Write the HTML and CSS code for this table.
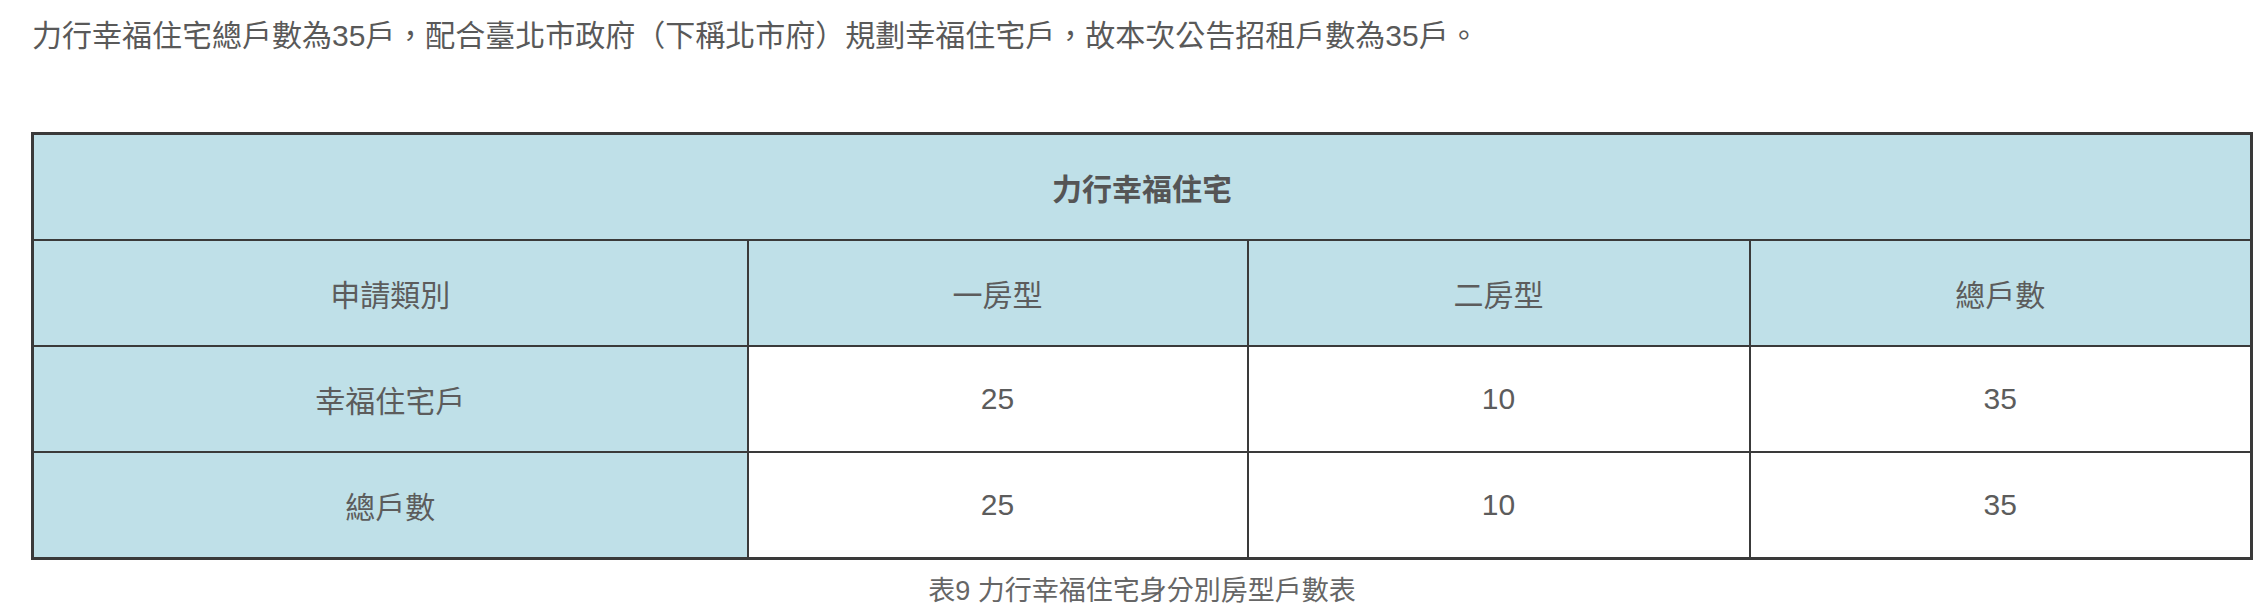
FILE: index.html
```html
<!DOCTYPE html>
<html lang="zh-Hant">
<head>
<meta charset="utf-8">
<title>力行幸福住宅</title>
<link rel="stylesheet" href="styles.css">
</head>
<body>
<main class="content">
  <p class="intro">力行幸福住宅總戶數為35戶，配合臺北市政府（下稱北市府）規劃幸福住宅戶，故本次公告招租戶數為35戶。</p>
  <table class="units">
    <colgroup>
      <col class="c1"><col class="c2"><col class="c3"><col class="c4">
    </colgroup>
    <thead>
      <tr><th colspan="4" class="head title">力行幸福住宅</th></tr>
      <tr>
        <th class="head">申請類別</th>
        <th class="head">一房型</th>
        <th class="head">二房型</th>
        <th class="head">總戶數</th>
      </tr>
    </thead>
    <tbody>
      <tr><th class="head">幸福住宅戶</th><td>25</td><td>10</td><td>35</td></tr>
      <tr><th class="head">總戶數</th><td>25</td><td>10</td><td>35</td></tr>
    </tbody>
    <caption class="cap">表9 力行幸福住宅身分別房型戶數表</caption>
  </table>
</main>
</body>
</html>
```
FILE: styles.css
```css
html, body {
  margin: 0;
  padding: 0;
  background: #ffffff;
}
body {
  font-family: "Liberation Sans", "Noto Sans CJK TC", sans-serif;
  color: #595959;
}
.content {
  padding: 12px 18px 0 31px;
}
.intro {
  margin: 0;
  padding-left: 1px;
  font-size: 30px;
  line-height: 48px;
}
.units {
  margin-top: 72px;
  width: 2219px;
  table-layout: fixed;
  border-collapse: collapse;
  border: 3px solid #3a3a3a;
  font-size: 30px;
}
.c1 { width: 715px; }
.c2 { width: 500px; }
.c3 { width: 502px; }
.c4 { width: 502px; }
.units th, .units td {
  border: 2px solid #3a3a3a;
  height: 104px;
  padding: 0;
  text-align: center;
  vertical-align: middle;
  font-weight: normal;
  color: #5c5c5c;
}
.units td {
  background: #ffffff;
}
.units .head {
  background: #bfe0e8;
}
.units .title {
  font-weight: bold;
  color: #555555;
}
.cap {
  caption-side: bottom;
  padding-top: 10px;
  font-size: 27px;
  line-height: 42px;
  color: #666666;
}
```
